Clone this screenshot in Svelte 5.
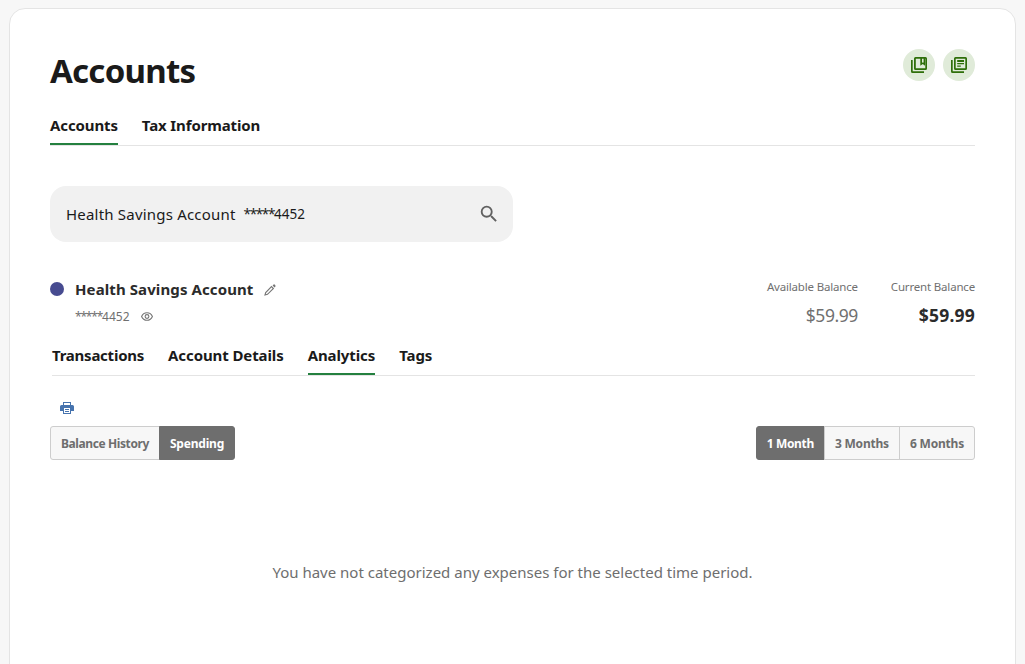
<script>
  let section = $state('Accounts')
  let tab = $state('Analytics')
  let chart = $state('Spending')
  let period = $state('1 Month')

  const sections = ['Accounts', 'Tax Information']
  const tabs = ['Transactions', 'Account Details', 'Analytics', 'Tags']
  const charts = ['Balance History', 'Spending']
  const periods = ['1 Month', '3 Months', '6 Months']

  const account = {
    name: 'Health Savings Account',
    lastDigits: '4452',
    available: '$59.99',
    current: '$59.99'
  }
</script>

<main class="card">
  <header class="page-header">
    <h1>Accounts</h1>
    <div class="header-actions">
      <button class="round-btn" aria-label="Saved">
        <svg viewBox="0 0 16 16" width="16" height="16">
          <path d="M0 3h1.700v11.300H13V16H1.500A1.500 1.500 0 0 1 0 14.500z" />
          <path fill-rule="evenodd" d="M4.500 0h10A1.500 1.500 0 0 1 16 1.500v10a1.500 1.500 0 0 1-1.500 1.500h-10A1.500 1.500 0 0 1 3 11.500v-10A1.500 1.500 0 0 1 4.500 0zM4.800 1.700v9.600h9.500V1.700H14v7l-2.250-1.600L9.300 8.700v-7zM11 1.700v4.200l.9-.6.7.5V1.700z" />
        </svg>
      </button>
      <button class="round-btn" aria-label="Statements">
        <svg viewBox="0 0 16 16" width="16" height="16">
          <path d="M0 3h1.700v11.300H13V16H1.500A1.500 1.500 0 0 1 0 14.500z" />
          <path fill-rule="evenodd" d="M4.500 0h10A1.500 1.500 0 0 1 16 1.500v10a1.500 1.500 0 0 1-1.500 1.500h-10A1.500 1.500 0 0 1 3 11.500v-10A1.500 1.500 0 0 1 4.500 0zM4.700 1.700v9.600h9.600V1.700zM6.200 3H13v2H6.200zM6.200 6H13v1.200H6.200zM6.200 8.500h3.600v1.300H6.200z" />
        </svg>
      </button>
    </div>
  </header>

  <nav class="tabs">
    {#each sections as item}
      <button class:active={section === item} onclick={() => (section = item)}>{item}</button>
    {/each}
  </nav>

  <div class="account-search">
    <span class="search-name">{account.name}</span>
    <span class="search-number"><span class="mask">*****</span>{account.lastDigits}</span>
    <svg viewBox="0 0 24 24" width="22" height="22">
      <path d="M15.500 14h-.79l-.28-.27A6.471 6.471 0 0 0 16 9.500 6.500 6.500 0 1 0 9.500 16c1.610 0 3.090-.59 4.230-1.570l.27.28v.79l5 4.990L20.490 19l-4.990-5zm-6 0C7.010 14 5 11.990 5 9.500S7.010 5 9.500 5 14 7.010 14 9.500 11.990 14 9.500 14z" />
    </svg>
  </div>

  <section class="account">
    <span class="dot"></span>
    <div class="account-info">
      <div class="account-name">
        <h2>{account.name}</h2>
        <svg viewBox="0 0 12 12" width="12" height="12">
          <path d="M1 11l.7-2.500L7.500 2.600l1.900 1.900L3.500 10.300z" />
          <path class="solid" d="M8.600 1.500l1-.9a.7.7 0 0 1 1 0l.8.8a.7.7 0 0 1 0 1l-.9 1z" />
        </svg>
      </div>
      <div class="account-number">
        <span><span class="mask">*****</span>{account.lastDigits}</span>
        <svg viewBox="0 0 12 9" width="12" height="9">
          <path d="M.6 4.500C1.600 2 3.500.7 6 .7S10.400 2 11.400 4.500C10.400 7 8.500 8.300 6 8.300S1.600 7 .6 4.500z" />
          <circle cx="6" cy="4.500" r="1.900" />
        </svg>
      </div>
    </div>
    <div class="balance">
      <span class="label">Available Balance</span>
      <span class="amount">{account.available}</span>
    </div>
    <div class="balance current">
      <span class="label">Current Balance</span>
      <span class="amount">{account.current}</span>
    </div>
  </section>

  <nav class="tabs account-tabs">
    {#each tabs as item}
      <button class:active={tab === item} onclick={() => (tab = item)}>{item}</button>
    {/each}
  </nav>

  <button class="print-btn" aria-label="Print">
    <svg viewBox="0 0 14 12" width="14" height="12">
      <path fill-rule="evenodd" d="M3 0h8v3H3zM4 1v2h6V1zM1.500 3h11A1.500 1.500 0 0 1 14 4.500V9h-3v3H3V9H0V4.500A1.500 1.500 0 0 1 1.500 3zM4 6v5h6V6zM5 7h4v1H5zM5 9h4v1H5z" />
    </svg>
  </button>

  <div class="filters">
    <div class="btn-group charts">
      {#each charts as item}
        <button class:active={chart === item} onclick={() => (chart = item)}>{item}</button>
      {/each}
    </div>
    <div class="btn-group periods">
      {#each periods as item}
        <button class:active={period === item} onclick={() => (period = item)}>{item}</button>
      {/each}
    </div>
  </div>

  <p class="empty">You have not categorized any expenses for the selected time period.</p>
</main>

<style>
  :global(body) {
    background: #f7f7f7;
    overflow: hidden;
  }

  .card {
    box-sizing: border-box;
    height: 680px;
    margin: 8px 9px 0;
    padding: 40px 40px 0;
    background: #fff;
    border: 1px solid #e4e4e4;
    border-radius: 16px;
    color: #1a1a1a;
    font-family: "Segoe UI", "Noto Sans", sans-serif;
  }

  button {
    margin: 0;
    padding: 0;
    border: none;
    background: none;
    font-family: inherit;
    cursor: pointer;
  }

  svg {
    display: block;
    flex: none;
  }

  .page-header {
    display: flex;
    justify-content: space-between;
    height: 64px;
  }

  h1 {
    margin: 0;
    font-size: 33px;
    font-weight: 700;
    letter-spacing: -0.75px;
    line-height: 44px;
  }

  .header-actions {
    display: flex;
    gap: 8px;
  }

  .round-btn {
    display: flex;
    align-items: center;
    justify-content: center;
    width: 32px;
    height: 32px;
    border-radius: 50%;
    background: #e0ebd9;
    fill: #2f6f0a;
  }

  .tabs {
    display: flex;
    gap: 24px;
    height: 32px;
    border-bottom: 1px solid #e4e4e4;
  }

  .tabs button {
    box-sizing: border-box;
    height: 32px;
    padding-bottom: 6px;
    border-bottom: 2px solid transparent;
    color: #1a1a1a;
    font-size: 15px;
    font-weight: 700;
    letter-spacing: -0.12px;
    line-height: 24px;
    white-space: nowrap;
  }

  .tabs button.active {
    border-bottom-color: #24803f;
  }

  .account-search {
    display: flex;
    align-items: center;
    box-sizing: border-box;
    width: 463px;
    height: 56px;
    margin-top: 40px;
    padding: 0 13px 0 16px;
    border-radius: 16px;
    background: #f1f1f1;
  }

  .search-name {
    margin-right: 8px;
    font-size: 15px;
    letter-spacing: 0.2px;
  }

  .search-number {
    font-size: 13.5px;
  }

  .mask {
    letter-spacing: -0.1em;
  }

  .account-search svg {
    margin-left: auto;
    fill: #616161;
  }

  .account {
    display: flex;
    height: 61px;
    margin-top: 35px;
  }

  .dot {
    width: 14px;
    height: 14px;
    margin: 5px 11px 0 0;
    border-radius: 50%;
    background: #474b90;
  }

  .account-info {
    flex: 1;
  }

  .account-name,
  .account-number {
    display: flex;
    align-items: center;
  }

  .account-name {
    gap: 11px;
    height: 25px;
  }

  h2 {
    margin: 0;
    color: #2b2b2b;
    font-size: 15px;
    font-weight: 700;
    letter-spacing: 0.1px;
    line-height: 25px;
  }

  .account-name svg,
  .account-number svg {
    fill: none;
    stroke: #757575;
    stroke-width: 1.1;
  }

  .account-name .solid {
    fill: #757575;
    stroke: none;
  }

  .account-number {
    gap: 11px;
    height: 28px;
    color: #707070;
    font-size: 12px;
  }

  .balance {
    display: flex;
    flex-direction: column;
    margin-left: 33px;
    text-align: right;
    color: #707070;
  }

  .label {
    font-size: 11.5px;
    letter-spacing: -0.18px;
    line-height: 20px;
  }

  .amount {
    font-size: 17.5px;
    letter-spacing: -0.45px;
    line-height: 37px;
  }

  .current .amount {
    color: #2b2b2b;
    font-weight: 700;
    letter-spacing: 0.2px;
  }

  .account-tabs {
    margin: 5px 0 0 2px;
  }

  .account-tabs button {
    letter-spacing: -0.1px;
  }

  .account-tabs button:first-child {
    letter-spacing: -0.24px;
  }

  .print-btn {
    display: block;
    margin: 26px 0 12px 10px;
    fill: #4673ae;
  }

  .filters {
    display: flex;
    justify-content: space-between;
  }

  .btn-group {
    display: flex;
  }

  .btn-group button {
    box-sizing: border-box;
    height: 34px;
    padding: 0 10px;
    border: 1px solid #cdcdcd;
    background: #f7f7f7;
    color: #6e6e6e;
    font-size: 12px;
    font-weight: 700;
    white-space: nowrap;
  }

  .charts button {
    letter-spacing: -0.4px;
  }

  .btn-group button + button {
    margin-left: -1px;
  }

  .charts button:last-child {
    letter-spacing: -0.2px;
  }

  .periods button {
    letter-spacing: -0.2px;
  }

  .periods button:first-child {
    letter-spacing: -0.34px;
  }

  .btn-group button:first-child {
    border-radius: 3px 0 0 3px;
  }

  .btn-group button:last-child {
    border-radius: 0 3px 3px 0;
  }

  .btn-group button.active {
    border-color: #6e6e6e;
    background: #6e6e6e;
    color: #fff;
  }

  .empty {
    margin: 100px 0 0;
    color: #6e6e6e;
    font-size: 15px;
    line-height: 24px;
    text-align: center;
  }
</style>
